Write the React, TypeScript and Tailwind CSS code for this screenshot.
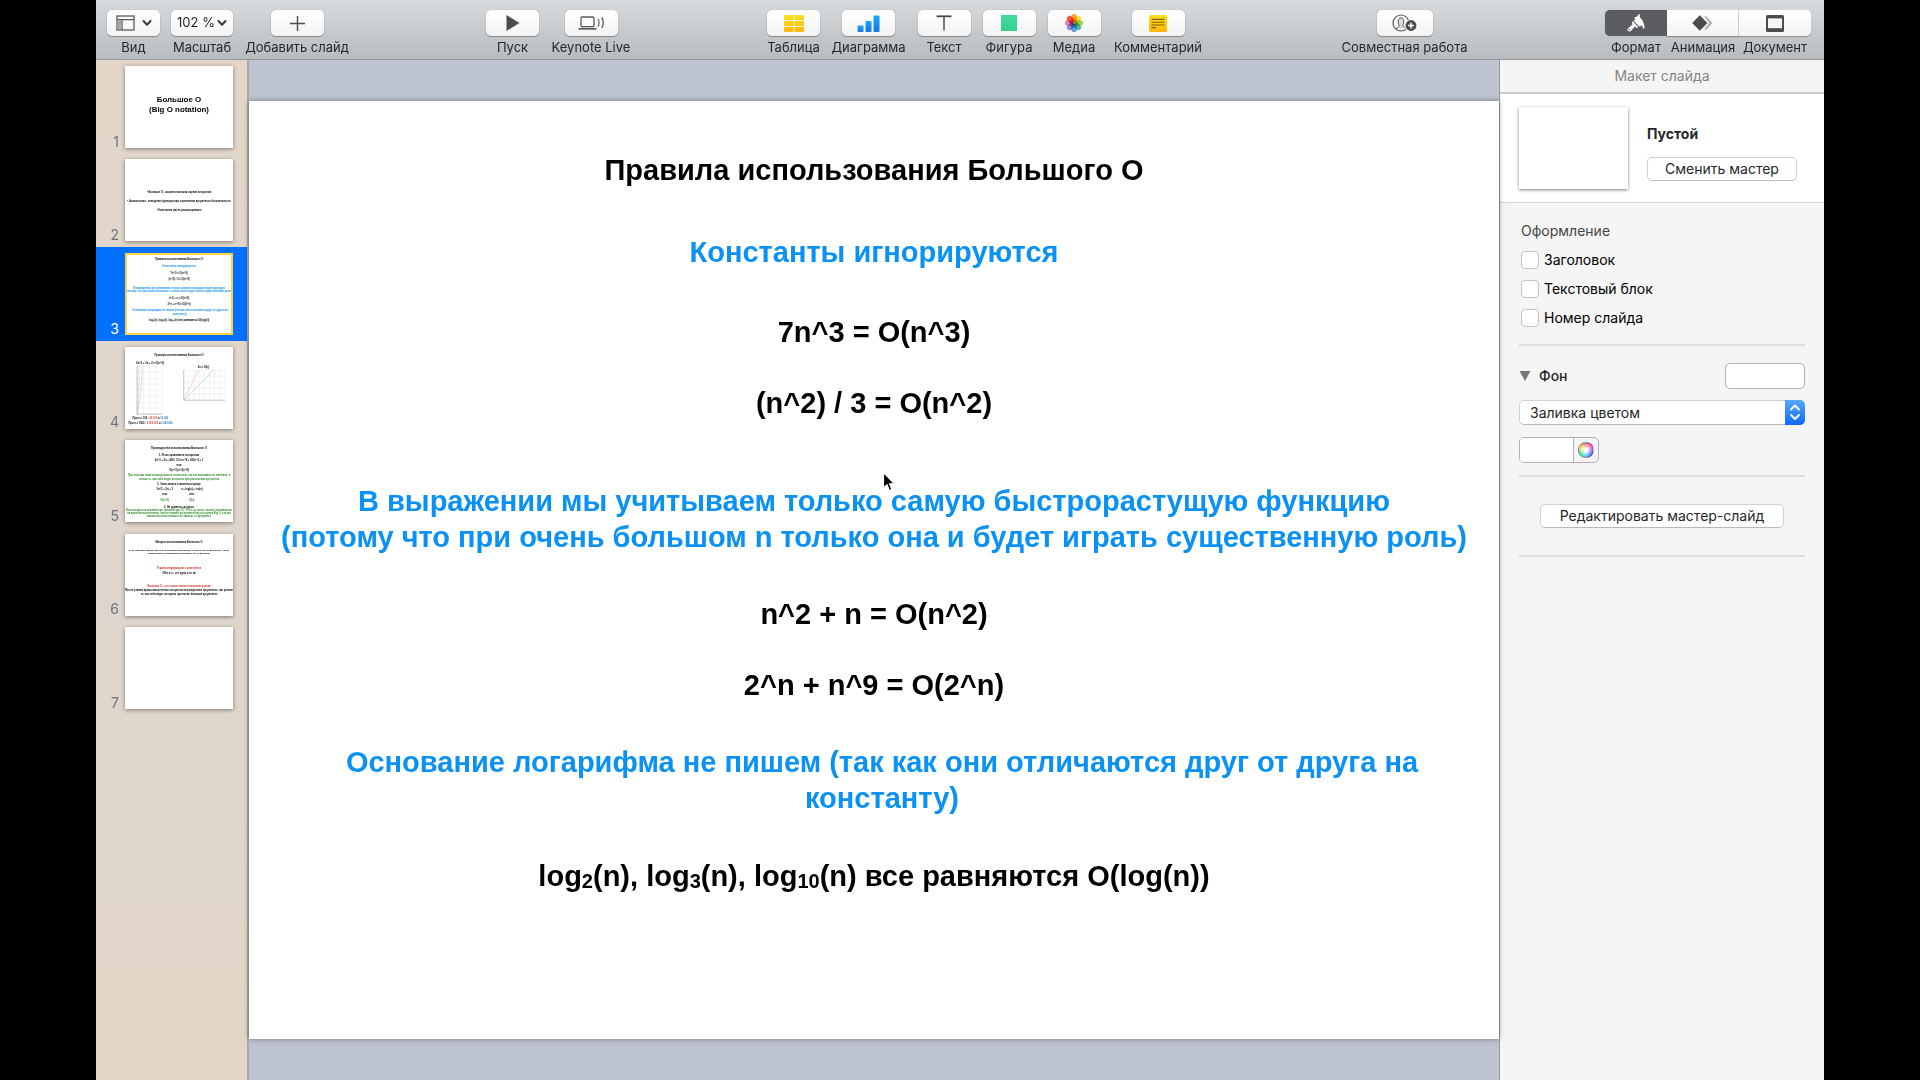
import type { ReactNode } from "react";

type Line = { y: number; text: string; x?: number; size?: number; fill?: string };

const BLUE = "#0a91f5";
const GREEN = "#2f8a2a";
const RED = "#c9302c";

const slide1: Line[] = [
  { y: 413, size: 92, text: "Большое О" },
  { y: 529, size: 92, text: "(Big O notation)" },
];

const slide2: Line[] = [
  { y: 390, text: "• Большое О - асимптотическая оценка алгоритма" },
  { y: 494, text: "• Асимптотика - поведение функции при стремлении аргумента к бесконечности" },
  { y: 594, text: "• Константы мы не рассматриваем" },
];

const slide3: Line[] = [
  { y: 80, text: "Правила использования Большого О" },
  { y: 161, text: "Константы игнорируются", fill: BLUE },
  { y: 241, text: "7n^3 = O(n^3)" },
  { y: 312, text: "(n^2) / 3 = O(n^2)" },
  { y: 410, text: "В выражении мы учитываем только самую быстрорастущую функцию", fill: BLUE },
  { y: 446, text: "(потому что при очень большом n только она и будет играть существенную роль)", fill: BLUE },
  { y: 523, text: "n^2 + n = O(n^2)" },
  { y: 594, text: "2^n + n^9 = O(2^n)" },
  { y: 671, x: 633, text: "Основание логарифма не пишем (так как они отличаются друг от друга на", fill: BLUE },
  { y: 707, x: 633, text: "константу)", fill: BLUE },
  { y: 784, text: "log₂(n), log₃(n), log₁₀(n) все равняются O(log(n))" },
];

const slide4: Line[] = [
  { y: 100, text: "Примеры использования Большого О" },
  { y: 197, x: 290, text: "6n^2 + 3n + 2 = O(n^2)" },
  { y: 240, x: 907, text: "3n = O(n)" },
];

const slide5: Line[] = [
  { y: 97, text: "Преимущества использования Большого О" },
  { y: 178, text: "1. Легко сравнивать алгоритмы" },
  { y: 235, text: "2n^3 + 3n + 400 / 3.5 и n^8 + 300n^3 + 1" },
  { y: 293, text: "или" },
  { y: 351, text: "O(n^3) и O(n^8)" },
  { y: 417, fill: GREEN, text: "При этом мы можем пожертвовать точностью, так как нам важно не значение, а" },
  { y: 452, fill: GREEN, text: "только то, как себя ведет алгоритм при увеличении аргумента" },
  { y: 517, text: "2. Сама запись становится проще" },
  { y: 575, x: 460, text: "2n^2 + 5n + 3" },
  { y: 575, x: 772, text: "n + log(n) + sin(n)" },
  { y: 633, x: 460, text: "или" },
  { y: 633, x: 772, text: "или" },
  { y: 695, x: 460, fill: GREEN, text: "O(n^2)" },
  { y: 695, x: 772, fill: GREEN, text: "O(n)" },
  { y: 776, text: "3. Не думаем о деталях" },
  { y: 817, fill: GREEN, text: "Если мощность компьютера, архитектура ОС, ЯП и т.д. могут сильно сказываться" },
  { y: 853, fill: GREEN, text: "на времени выполнения, они не влияют на асимптотику по оценке Big O, так как" },
  { y: 888, fill: GREEN, text: "являются константами и не зависят от аргумента" },
];

const slide6: Line[] = [
  { y: 100, text: "Минусы использования Большого О" },
  { y: 197, size: 27, text: "Есть большое множество очень похожих алгоритмов, которые мы будем иначе, часто" },
  { y: 228, size: 27, text: "использовать одинаковым образом и его недостатки" },
  { y: 405, fill: RED, text: "Теряем информацию о константах" },
  { y: 459, text: "100n и n - это одно и то же" },
  { y: 606, fill: RED, text: "Большое О - это только асимптотическая оценка" },
  { y: 660, text: "Мы не узнаем время выполнения алгоритма на конкретных аргументах, мы узнаем" },
  { y: 695, text: "то, как себя ведет алгоритм при очень больших аргументах" },
];

function Grid({ x, y, w, h, cols, rows }: { x: number; y: number; w: number; h: number; cols: number; rows: number }) {
  return (
    <g stroke="#dcdcdc" strokeWidth="4">
      {Array.from({ length: cols + 1 }, (_, i) => (
        <line key={"c" + i} x1={x + (w / cols) * i} x2={x + (w / cols) * i} y1={y} y2={y + h} />
      ))}
      {Array.from({ length: rows + 1 }, (_, i) => (
        <line key={"r" + i} x1={x} x2={x + w} y1={y + (h / rows) * i} y2={y + (h / rows) * i} />
      ))}
      <path d={`M${x} ${y}V${y + h}H${x + w}`} fill="none" stroke="#9a9a9a" strokeWidth="6" />
    </g>
  );
}

function Charts() {
  return (
    <>
      <Grid x={140} y={216} w={292} h={556} cols={4} rows={8} />
      <path d="M140 772C152 640 158 420 166 216" fill="none" stroke="#e59a9a" strokeWidth="5" />
      <path d="M140 772C172 660 190 420 202 216" fill="none" stroke="#8fb0dc" strokeWidth="5" />
      <Grid x={680} y={262} w={478} h={348} cols={8} rows={5} />
      <path d="M680 610L850 262" fill="none" stroke="#e59a9a" strokeWidth="5" />
      <path d="M680 610L1026 262" fill="none" stroke="#8fb0dc" strokeWidth="5" />
      <text x="88" y="830" fontSize="30">
        При n = 100 : <tspan fill="#e8403a">60.302</tspan> и <tspan fill="#2b78c8">10.000</tspan>
      </text>
      <text x="40" y="884" fontSize="30">
        При n = 1000 : <tspan fill="#e8403a">6.003.002</tspan> и <tspan fill="#2b78c8">1.000.000</tspan>
      </text>
    </>
  );
}

const slides: { lines: Line[]; extra?: ReactNode }[] = [
  { lines: slide1 },
  { lines: slide2 },
  { lines: slide3 },
  { lines: slide4, extra: <Charts /> },
  { lines: slide5 },
  { lines: slide6 },
  { lines: [] },
];

function Thumbnail({ lines, extra }: { lines: Line[]; extra?: ReactNode }) {
  return (
    <svg viewBox="0 0 1250 938" className="block h-full w-full" fontFamily='"Liberation Sans", Arial, sans-serif' fontWeight="700">
      {lines.map((l, i) => (
        <text key={i} x={l.x ?? 625} y={l.y} textAnchor="middle" fontSize={l.size ?? 30} fill={l.fill ?? "#000"}>
          {l.text}
        </text>
      ))}
      {extra}
    </svg>
  );
}

function Sidebar() {
  return (
    <nav aria-label="Слайды" className="w-[153px] shrink-0 border-r-2 border-[#a9a9ae] bg-linear-to-b from-[#e3d6c9] via-[#dfd5cc] to-[#e2d6c8]">
      <div className="flex h-[655px] flex-col">
        {slides.map((s, i) => {
          const active = i === 2;
          return (
            <button
              key={i}
              type="button"
              className={
                active
                  ? "flex flex-1 items-center bg-[#0470ff] text-white"
                  : "flex flex-1 items-center text-[#6d747d]"
              }
            >
              <span className="w-[23px] self-end pb-[2px] text-right text-sm leading-5">{i + 1}</span>
              <span
                className={
                  active
                    ? "ml-[6px] block h-[82px] w-[108px] bg-white outline-2 -outline-offset-2 outline-[#fdd43c]"
                    : "ml-[6px] block h-[82px] w-[108px] bg-white shadow-[0_1px_4px_rgba(0,0,0,0.45)]"
                }
              >
                <Thumbnail lines={s.lines} extra={s.extra} />
              </span>
            </button>
          );
        })}
      </div>
    </nav>
  );
}

function Tool({ label, width, button = "w-[53px]", children }: { label: string; width: string; button?: string; children: ReactNode }) {
  return (
    <button type="button" className={"flex flex-col items-center " + width}>
      <span
        className={
          "flex h-[26px] items-center justify-center rounded-[5px] bg-linear-to-b from-white to-[#f3f3f3] shadow-[0_1px_1px_rgba(0,0,0,0.3),0_0_1px_rgba(0,0,0,0.35)] " +
          button
        }
      >
        {children}
      </span>
      <span className="mt-[2px] text-[13px] leading-[18px] whitespace-nowrap">{label}</span>
    </button>
  );
}

function Chevron() {
  return (
    <svg width="10" height="8" viewBox="0 0 10 8" fill="none" stroke="#3c3c3e" strokeWidth="2" strokeLinecap="round" strokeLinejoin="round">
      <path d="M1.5 2L5 5.8 8.5 2" />
    </svg>
  );
}

const petals: [number, string][] = [
  [0, "#f79a1e"],
  [45, "#f3e125"],
  [90, "#9fce3a"],
  [135, "#3db89a"],
  [180, "#4d9be6"],
  [225, "#8f7bd0"],
  [270, "#d673b8"],
  [315, "#ee4435"],
];

function PhotosIcon() {
  return (
    <svg width="18" height="18" viewBox="0 0 18 18">
      {petals.map(([a, c]) => (
        <rect key={a} x="6.2" y="0" width="5.6" height="8.6" rx="2.8" fill={c} fillOpacity="0.88" transform={`rotate(${a} 9 9)`} className="mix-blend-multiply" />
      ))}
    </svg>
  );
}

function Toolbar() {
  return (
    <header className="flex h-[60px] shrink-0 items-start justify-between border-b border-[#97999d] bg-linear-to-b from-[#d8dbde] to-[#b9bcbf] pt-[10px] pr-[13px] pl-[11px] text-[#262729]">
      <div className="flex gap-[11px]">
        <Tool label="Вид" width="w-[53px]">
          <svg width="19" height="16" viewBox="0 0 19 16" fill="none" stroke="#58595b" strokeWidth="1.3">
            <rect x="1" y="1" width="17" height="14" />
            <path d="M1 4.7H18M6 4.7V15" />
            <rect x="1.6" y="5.3" width="3.8" height="9.1" fill="#a5a6a8" stroke="none" />
          </svg>
          <span className="ml-[7px]">
            <Chevron />
          </span>
        </Tool>
        <Tool label="Масштаб" width="w-[62px]" button="w-[62px]">
          <span className="mr-[2px] text-[13px] whitespace-nowrap">102 %</span>
          <Chevron />
        </Tool>
        <Tool label="Добавить слайд" width="w-[106px]">
          <svg width="15" height="15" viewBox="0 0 15 15" stroke="#4b4c4e" strokeWidth="1.4">
            <path d="M7.5 0V15M0 7.5H15" />
          </svg>
        </Tool>
      </div>
      <div className="flex gap-3">
        <Tool label="Пуск" width="w-[53px]">
          <svg width="14" height="16" viewBox="0 0 14 16" fill="#4b4c4e">
            <path d="M0.5 0L13.5 8 0.5 16Z" />
          </svg>
        </Tool>
        <Tool label="Keynote Live" width="w-[80px]">
          <svg width="27" height="14" viewBox="0 0 27 14" fill="none" stroke="#58595b" strokeWidth="1.3">
            <rect x="3" y="1" width="13" height="9.6" rx="1" />
            <path d="M0.5 12.8H18.5" strokeWidth="1.7" />
            <path d="M20 3C21.3 5 21.3 8.6 20 10.6M23.6 1.4C25.8 4.2 25.8 9.4 23.6 12.2" />
          </svg>
        </Tool>
      </div>
      <div className="flex gap-[11px]">
        <Tool label="Таблица" width="w-[53px]">
          <svg width="20" height="17" viewBox="0 0 20 17">
            <defs>
              <linearGradient id="yl" x1="0" y1="0" x2="0" y2="1">
                <stop offset="0" stopColor="#fae11b" />
                <stop offset="1" stopColor="#fdb70c" />
              </linearGradient>
            </defs>
            <rect width="20" height="17" rx="1.5" fill="url(#yl)" />
            <path d="M10 0V17M0 5.5H20M0 11.5H20" stroke="#fff6cf" strokeWidth="1" />
          </svg>
        </Tool>
        <Tool label="Диаграмма" width="w-[75px]">
          <svg width="23" height="17" viewBox="0 0 23 17">
            <defs>
              <linearGradient id="bl" x1="0" y1="0" x2="0" y2="1">
                <stop offset="0" stopColor="#1fa8f4" />
                <stop offset="1" stopColor="#1574f0" />
              </linearGradient>
            </defs>
            <rect x="0.5" y="10.5" width="6" height="6.5" rx="1" fill="url(#bl)" />
            <rect x="8.5" y="6" width="6" height="11" rx="1" fill="url(#bl)" />
            <rect x="16.5" y="0.5" width="6" height="16.5" rx="1" fill="url(#bl)" />
          </svg>
        </Tool>
        <Tool label="Текст" width="w-[54px]">
          <svg width="16" height="16" viewBox="0 0 16 16" fill="none" stroke="#4b4c4e">
            <path d="M0.5 1.3H15.5" strokeWidth="1.8" />
            <path d="M8 1.3V15.5" strokeWidth="1.5" />
          </svg>
        </Tool>
        <Tool label="Фигура" width="w-[54px]">
          <span className="h-4 w-4 bg-linear-to-b from-[#45d8a3] to-[#2fd28b]" />
        </Tool>
        <Tool label="Медиа" width="w-[54px]">
          <PhotosIcon />
        </Tool>
        <Tool label="Комментарий" width="w-[92px]">
          <svg width="18" height="17" viewBox="0 0 18 17">
            <rect width="18" height="17" rx="1.5" fill="url(#yl)" />
            <path d="M2.5 4.4H15.5M2.5 7.2H15.5M2.5 10H15.5M2.5 12.6H7" stroke="#7c6110" strokeWidth="1.1" />
          </svg>
        </Tool>
      </div>
      <Tool label="Совместная работа" width="w-[129px]" button="w-[56px]">
        <svg width="25" height="18" viewBox="0 0 25 18" fill="none" stroke="#58595b">
          <circle cx="9" cy="9" r="8" strokeWidth="1.2" />
          <path d="M4.2 15.2C4.6 13.2 7 13 7.2 12 7.3 11.2 6.2 10 6.2 7.4 6.2 5 7.4 3.9 9 3.9S11.8 5 11.8 7.4C11.8 10 10.7 11.2 10.8 12 10.9 12.6 12 12.9 12.8 13.4" fill="#d9d9da" strokeWidth="1" />
          <circle cx="19" cy="11.5" r="6.2" fill="#fafafa" stroke="none" />
          <circle cx="19" cy="11.5" r="5.4" fill="#4b4c4e" stroke="none" />
          <path d="M19 8.6V14.4M16.1 11.5H21.9" stroke="#fff" strokeWidth="1.5" />
        </svg>
      </Tool>
      <div className="flex">
        <button type="button" aria-pressed="true" className="flex w-[62px] flex-col items-center">
          <span className="flex h-[26px] w-full items-center justify-center rounded-l-[5px] bg-[#5c5d60] shadow-[0_0_1px_rgba(0,0,0,0.4)]">
            <svg width="18" height="18" viewBox="0 0 18 18" fill="#fff">
              <path d="M7.4 3.4L10.6 2.2 11.3 0.3 12.6 0.2 13 3.4 15.4 6.2 17 10.2 17.6 13.6C17.6 14.9 15.7 14.9 15.6 13.6L15.2 11 14 12.4 13 11.4 12.2 12.8 6.6 6.4 8.3 5.4Z" />
              <path d="M5.8 7.2L11.2 13.2 9.8 14 7.8 12.6 3.6 17.2C2 18.6-0.6 16.2 0.8 14.6L5.6 10.6 4.8 8.2Z" />
              <circle cx="2.2" cy="15.6" r="0.8" fill="#5c5d60" />
            </svg>
          </span>
          <span className="mt-[2px] text-[13px] leading-[18px] whitespace-nowrap">Формат</span>
        </button>
        <button type="button" className="flex w-[72px] flex-col items-center">
          <span className="flex h-[26px] w-full items-center justify-center border-r border-[#d5d6d8] bg-linear-to-b from-white to-[#f3f3f3] shadow-[0_1px_1px_rgba(0,0,0,0.3)]">
            <svg width="21" height="16" viewBox="0 0 21 16">
              <path d="M12 1.5H14.6L20.5 8 14.6 14.5H12L17.2 8Z" fill="#b3b4b6" />
              <path d="M7.8 0.2L15.4 8 7.8 15.8 0.2 8Z" fill="#4b4c4e" />
            </svg>
          </span>
          <span className="mt-[2px] text-[13px] leading-[18px] whitespace-nowrap">Анимация</span>
        </button>
        <button type="button" className="flex w-[72px] flex-col items-center">
          <span className="flex h-[26px] w-full items-center justify-center rounded-r-[5px] bg-linear-to-b from-white to-[#f3f3f3] shadow-[0_1px_1px_rgba(0,0,0,0.3)]">
            <svg width="18" height="17" viewBox="0 0 18 17">
              <rect width="18" height="17" rx="1.5" fill="#4b4c4e" />
              <rect x="2" y="3.4" width="14" height="9.8" fill="#f7f7f7" />
            </svg>
          </span>
          <span className="mt-[2px] text-[13px] leading-[18px] whitespace-nowrap">Документ</span>
        </button>
      </div>
    </header>
  );
}

function Sub({ children }: { children: ReactNode }) {
  return <sub className="bottom-[-2px] text-[20px] leading-none">{children}</sub>;
}

function Slide() {
  return (
    <main className="flex min-w-0 flex-1 items-center bg-[#bdc3cf]">
      <article className="relative flex aspect-4/3 w-full flex-col bg-white pt-[51px] text-center font-['Liberation_Sans',Arial,sans-serif] text-[29px] leading-9 font-bold whitespace-nowrap text-black shadow-[0_0_5px_rgba(0,0,0,0.4)]">
        <h1>Правила использования Большого О</h1>
        <h2 className="mt-[46px] text-[#0a91f5]">Константы игнорируются</h2>
        <p className="mt-11">7n^3 = O(n^3)</p>
        <p className="mt-[35px]">(n^2) / 3 = O(n^2)</p>
        <h2 className="mt-[62px] text-[#0a91f5]">
          В выражении мы учитываем только самую быстрорастущую функцию
          <br />
          (потому что при очень большом n только она и будет играть существенную роль)
        </h2>
        <p className="mt-[41px]">n^2 + n = O(n^2)</p>
        <p className="mt-[35px]">2^n + n^9 = O(2^n)</p>
        <h2 className="mt-[41px] pl-4 text-[#0a91f5]">
          Основание логарифма не пишем (так как они отличаются друг от друга на
          <br />
          константу)
        </h2>
        <p className="mt-[42px]">
          log<Sub>2</Sub>(n), log<Sub>3</Sub>(n), log<Sub>10</Sub>(n) все равняются O(log(n))
        </p>
        <svg className="absolute top-[370px] left-[633px]" width="14" height="22" viewBox="0 0 14 22">
          <path d="M1.5 1.5V17L5 13.8 7.4 19.6 10 18.5 7.6 12.8H12.4Z" fill="#000" stroke="#fff" strokeWidth="1.2" />
        </svg>
      </article>
    </main>
  );
}

const pushButton = "h-6 rounded-[5px] border border-[#d0d0d0] border-b-[#b9b9b9] bg-white text-sm leading-[22px] text-[#262626] whitespace-nowrap";

function Inspector() {
  return (
    <aside className="flex w-[325px] shrink-0 flex-col border-l border-[#98989d] bg-[#f5f5f5] text-sm text-[#262626]">
      <h2 className="flex h-[34px] items-center justify-center border-b-2 border-[#c9cad1] text-[#858585]">Макет слайда</h2>
      <section className="flex border-b border-[#d2d2d2] bg-white py-[13px] pl-[19px]">
        <div className="h-[82px] w-[109px] bg-white shadow-[0_1px_3px_rgba(0,0,0,0.5)]" />
        <div className="ml-[19px] pt-[17px]">
          <h3 className="leading-5 font-bold">Пустой</h3>
          <button type="button" className={pushButton + " mt-[13px] w-[150px]"}>
            Сменить мастер
          </button>
        </div>
      </section>
      <div className="px-[19px]">
        <div role="group" aria-labelledby="appearance" className="border-b-2 border-[#dedede] pt-[18px] pb-4 pl-[2px]">
          <h3 id="appearance" className="leading-5 text-[#454545]">
            Оформление
          </h3>
          <div className="mt-[9px] flex flex-col gap-[9px] text-black">
            {["Заголовок", "Текстовый блок", "Номер слайда"].map((t) => (
              <label key={t} className="flex items-center gap-[5px] leading-5">
                <input type="checkbox" className="h-[18px] w-[18px] appearance-none rounded-[4px] border border-[#c2c2c2] bg-white checked:bg-[#0470ff]" />
                {t}
              </label>
            ))}
          </div>
        </div>
        <section className="border-b-2 border-[#dedede] pt-[17px] pb-3">
          <div className="flex items-center">
            <button type="button" aria-expanded="true" className="flex items-center gap-2 font-medium">
              <svg width="12" height="10" viewBox="0 0 12 10" fill="#777">
                <path d="M0.5 0H11.5L6 10Z" />
              </svg>
              Фон
            </button>
            <button type="button" aria-label="Цвет фона" className="ml-auto h-[26px] w-20 rounded-[5px] border border-[#b0b0b0] bg-white" />
          </div>
          <div className="relative mt-[11px] flex">
            <select aria-label="Тип заливки" className="h-[25px] w-full appearance-none rounded-[5px] border border-[#d0d0d0] border-b-[#b9b9b9] bg-white pl-[10px] text-sm">
              <option>Заливка цветом</option>
            </select>
            <svg className="pointer-events-none absolute top-0 right-0 h-full" width="20" height="25" viewBox="0 0 20 25">
              <defs>
                <linearGradient id="sel" x1="0" y1="0" x2="0" y2="1">
                  <stop offset="0" stopColor="#5aa8f8" />
                  <stop offset="1" stopColor="#0b68fb" />
                </linearGradient>
              </defs>
              <path d="M0 0H15A5 5 0 0 1 20 5V20A5 5 0 0 1 15 25H0Z" fill="url(#sel)" />
              <path d="M6 9.5L10 5.5 14 9.5M6 15L10 19 14 15" fill="none" stroke="#fff" strokeWidth="1.8" strokeLinecap="round" strokeLinejoin="round" />
            </svg>
          </div>
          <div className="mt-3 flex h-[26px] w-20 overflow-hidden rounded-[5px] border border-[#b0b0b0]">
            <button type="button" aria-label="Цвет заливки" className="flex-1 border-r border-[#b0b0b0] bg-white" />
            <button type="button" aria-label="Палитра" className="flex w-6 items-center justify-center">
              <span className="h-4 w-4 rounded-full border border-black/15 bg-[radial-gradient(circle,#fff_15%,rgba(255,255,255,0)_75%),conic-gradient(#f0525a,#f03ccf_60deg,#7a3cf0_100deg,#3a6cf0_140deg,#2fd6f0_190deg,#3fe07a_240deg,#d8e34a_290deg,#f0525a)]" />
            </button>
          </div>
        </section>
        <div className="flex justify-center border-b-2 border-[#dedede] py-[27px]">
          <button type="button" className={pushButton + " w-[244px]"}>
            Редактировать мастер-слайд
          </button>
        </div>
      </div>
    </aside>
  );
}

export default function App() {
  return (
    <div className="flex min-h-screen bg-black px-24 font-[Inter,Roboto,sans-serif]">
      <div className="flex min-w-0 flex-1 flex-col">
        <Toolbar />
        <div className="flex flex-1">
          <Sidebar />
          <Slide />
          <Inspector />
        </div>
      </div>
    </div>
  );
}
